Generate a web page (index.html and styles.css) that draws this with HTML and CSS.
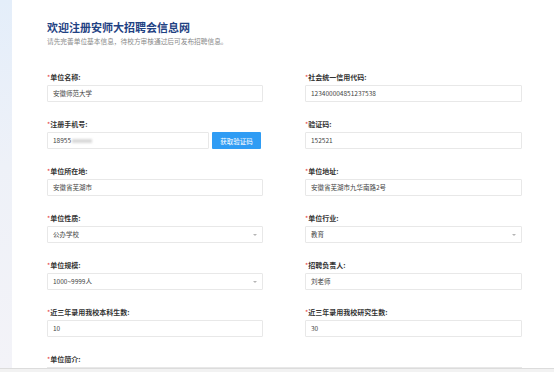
FILE: index.html
```html
<!DOCTYPE html>
<html lang="zh-CN">
<head>
    <meta charset="UTF-8">
    <meta name="viewport" content="width=device-width, initial-scale=1.0">
    <title>欢迎注册安师大招聘会信息网</title>
    <link rel="stylesheet" href="styles.css">
</head>
<body>
    <div class="page">
        <div class="side"></div>
        <main class="card">
            <h1>欢迎注册安师大招聘会信息网</h1>
            <p class="sub">请先完善单位基本信息，待校方审核通过后可发布招聘信息。</p>

            <form class="form-grid">
                <div class="field">
                    <label><span class="req">*</span>单位名称:</label>
                    <div class="input">安徽师范大学</div>
                </div>
                <div class="field">
                    <label><span class="req">*</span>社会统一信用代码:</label>
                    <div class="input">123400004851237538</div>
                </div>

                <div class="field">
                    <label><span class="req">*</span>注册手机号:</label>
                    <div class="phone-row">
                        <div class="input phone">18955<span class="masked"></span></div>
                        <button type="button" class="code-btn">获取验证码</button>
                    </div>
                </div>
                <div class="field">
                    <label><span class="req">*</span>验证码:</label>
                    <div class="input">152521</div>
                </div>

                <div class="field">
                    <label><span class="req">*</span>单位所在地:</label>
                    <div class="input">安徽省芜湖市</div>
                </div>
                <div class="field">
                    <label><span class="req">*</span>单位地址:</label>
                    <div class="input">安徽省芜湖市九华南路2号</div>
                </div>

                <div class="field">
                    <label><span class="req">*</span>单位性质:</label>
                    <div class="input select">公办学校</div>
                </div>
                <div class="field">
                    <label><span class="req">*</span>单位行业:</label>
                    <div class="input select">教育</div>
                </div>

                <div class="field">
                    <label><span class="req">*</span>单位规模:</label>
                    <div class="input select">1000~9999人</div>
                </div>
                <div class="field">
                    <label><span class="req">*</span>招聘负责人:</label>
                    <div class="input">刘老师</div>
                </div>

                <div class="field">
                    <label><span class="req">*</span>近三年录用我校本科生数:</label>
                    <div class="input">10</div>
                </div>
                <div class="field">
                    <label><span class="req">*</span>近三年录用我校研究生数:</label>
                    <div class="input">30</div>
                </div>

                <div class="field wide">
                    <label><span class="req">*</span>单位简介:</label>
                    <div class="textarea"></div>
                </div>
            </form>
        </main>
    </div>
    <div class="bottom-bar"></div>
</body>
</html>
```

FILE: styles.css
```css
:root {
    --title-color: #1f4283;
    --label-color: #333333;
    --text-color: #444444;
    --border-color: #e8e8e8;
    --req-color: #e4393c;
    --btn-color: #2f9cf4;
}

* {
    margin: 0;
    padding: 0;
    box-sizing: border-box;
}

html, body {
    height: 100%;
}

body {
    font-family: "Noto Sans CJK SC", "Noto Sans", sans-serif;
    background: #f2f2f2;
    color: var(--text-color);
    overflow: hidden;
}

.page {
    display: flex;
    height: 369px;
    border-bottom: 1px solid #dcdcdc;
    overflow: hidden;
}

.side {
    width: 12px;
    flex-shrink: 0;
    background: linear-gradient(180deg, #e4eefa 0%, #eef1f8 45%, #f3f3f8 100%);
}

.card {
    flex: 1;
    background: #ffffff;
    padding: 20px 32px 0 35px;
}

h1 {
    font-size: 11px;
    line-height: 14px;
    font-weight: 700;
    color: var(--title-color);
}

.sub {
    margin-top: 3px;
    font-size: 6.7px;
    line-height: 9px;
    color: #8a8a8a;
}

.form-grid {
    margin-top: 25px;
    display: grid;
    grid-template-columns: 216px 217px;
    column-gap: 42px;
}

.field {
    margin-bottom: 16px;
}

.field.wide {
    grid-column: 1 / -1;
}

.field label {
    display: block;
    font-size: 7px;
    line-height: 12px;
    font-weight: 700;
    color: var(--label-color);
    margin-bottom: 2px;
}

.req {
    color: var(--req-color);
    font-weight: 400;
}

.input {
    height: 17px;
    border: 1px solid var(--border-color);
    border-radius: 1px;
    padding: 0 5px;
    font-size: 6.5px;
    line-height: 15px;
    color: var(--text-color);
    position: relative;
}

.select::after {
    content: '';
    position: absolute;
    right: 5px;
    top: 7px;
    border-left: 2px solid transparent;
    border-right: 2px solid transparent;
    border-top: 2px solid #b5b5b5;
}

.phone-row {
    display: flex;
    gap: 3px;
}

.phone {
    width: 162px;
}

.masked {
    display: inline-block;
    width: 20px;
    height: 4px;
    margin-left: 1px;
    vertical-align: middle;
    background: #d9d9d9;
    filter: blur(1px);
}

.code-btn {
    width: 49px;
    height: 17px;
    border: none;
    border-radius: 1px;
    background: var(--btn-color);
    color: #ffffff;
    font-family: inherit;
    font-size: 6.5px;
    cursor: pointer;
}

.textarea {
    height: 40px;
    border: 1px solid var(--border-color);
}

.bottom-bar {
    height: 3px;
}
```
